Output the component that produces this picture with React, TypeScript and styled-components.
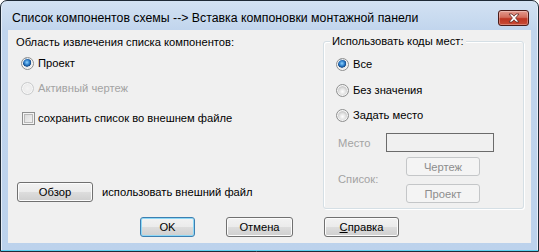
import React from 'react';
import styled, { createGlobalStyle } from 'styled-components';

const Global = createGlobalStyle`
  html, body { margin: 0; padding: 0; background: #ffffff; }
  body {
    font-family: "Liberation Sans", Arial, sans-serif;
    font-size: 11.2px;
    color: #000;
  }
  * { box-sizing: border-box; }
`;

const Window = styled.div`
  width: 539px;
  height: 252px;
  border: 1px solid #1f2a36;
  border-radius: 7px 7px 0 0;
  background: linear-gradient(180deg, #d3e2f3 0px, #c1d5ed 29px, #bcd2ec 100%);
  box-shadow: inset 0 -1px 0 #5ad1f0, inset 1px 0 0 #e6eef8, inset -1px 0 0 #e6eef8;
  padding: 0 7px 8px 7px;
  display: flex;
  flex-direction: column;
`;

const TitleBar = styled.div`
  height: 29px;
  padding: 5px 0 0 4px;
  display: flex;
  align-items: center;
  justify-content: space-between;
`;

const Title = styled.span`
  font-size: 12.3px;
  color: #000;
  line-height: 14px;
`;

const CloseButton = styled.div`
  width: 31px;
  height: 16px;
  margin-right: 2px;
  border: 1px solid #4a1b18;
  border-radius: 3px;
  background: linear-gradient(180deg, #e49a8e 0%, #d36d5c 45%, #bd3522 55%, #c94c36 100%);
  box-shadow: inset 0 0 0 1px rgba(255, 255, 255, 0.3);
  display: flex;
  align-items: center;
  justify-content: center;
`;

const Client = styled.div`
  width: 523px;
  height: 213px;
  background: #f0f0f0;
  display: flex;
  flex-direction: column;
`;

const Top = styled.div`
  display: flex;
  height: 179px;
`;

const LeftCol = styled.div`
  width: 307px;
  display: flex;
  flex-direction: column;
  padding-top: 5px;
`;

const Line = styled.div<{ $top: number; $left: number; $gap?: number }>`
  display: flex;
  align-items: center;
  height: 20px;
  margin-top: ${(p) => p.$top}px;
  padding-left: ${(p) => p.$left}px;
  gap: ${(p) => p.$gap ?? 4}px;
`;

const Label = styled.span<{ $disabled?: boolean }>`
  line-height: 14px;
  white-space: nowrap;
  color: ${(p) => (p.$disabled ? '#a3a3a3' : '#000')};
`;

const Heading = styled.div`
  line-height: 14px;
  padding-left: 8px;
`;

const Radio = styled.span<{ $checked?: boolean; $disabled?: boolean }>`
  width: 13px;
  height: 13px;
  flex: none;
  border-radius: 50%;
  border: 1px solid ${(p) => (p.$disabled ? '#c9cbcc' : '#8e8f8f')};
  background: ${(p) =>
    p.$disabled
      ? 'radial-gradient(circle at 50% 50%, #f4f4f4 0, #e9e9e9 70%)'
      : p.$checked
      ? 'radial-gradient(circle at 45% 40%, #8fd4ff 0, #2c7cc9 2.6px, #144a86 4px, #e6e6e6 4.5px, #f6f6f6 100%)'
      : 'radial-gradient(circle at 50% 60%, #ffffff 0, #e3e3e3 3px, #c9c9c9 5px, #f3f3f3 6px)'};
  box-shadow: inset 0 0 0 1px ${(p) => (p.$disabled ? '#f7f7f7' : '#f5f5f5')};
`;

const Check = styled.span`
  width: 13px;
  height: 13px;
  flex: none;
  border: 1px solid #8e8f8f;
  background: linear-gradient(135deg, #d6d6d6 0%, #f6f6f6 100%);
  box-shadow: inset 0 0 0 1px #f4f4f4, inset 0 0 0 2px #b9b9b9;
`;

const Button = styled.div<{ $w: number; $h?: number; $default?: boolean; $disabled?: boolean }>`
  width: ${(p) => p.$w}px;
  height: ${(p) => p.$h ?? 20}px;
  flex: none;
  display: flex;
  align-items: center;
  justify-content: center;
  border-radius: 3px;
  line-height: 14px;
  border: 1px solid ${(p) => (p.$default ? '#3c7fb1' : p.$disabled ? '#c4c6c8' : '#707070')};
  color: ${(p) => (p.$disabled ? '#8d8d8d' : '#000')};
  background: ${(p) =>
    p.$disabled
      ? '#f4f4f4'
      : 'linear-gradient(180deg, #f2f2f2 0%, #ebebeb 50%, #dddddd 50%, #cfcfcf 100%)'};
  box-shadow: inset 0 0 0 1px ${(p) => (p.$default ? '#8ed8f6' : p.$disabled ? '#f4f4f4' : '#fcfcfc')};
`;

const Group = styled.fieldset`
  margin: 4px 0 0 8px;
  width: 201px;
  height: 175px;
  padding: 0;
  border: 1px solid #d5dfe5;
  border-radius: 3px;
  box-shadow: inset 1px 1px 0 #ffffff, 1px 1px 0 #ffffff;
  display: flex;
  flex-direction: column;
`;

const Legend = styled.legend`
  margin-left: 6px;
  padding: 0 2px;
  line-height: 14px;
  background: #f0f0f0;
`;

const PlaceGrid = styled.div`
  margin-top: 8px;
  padding-left: 14px;
  display: grid;
  grid-template-columns: 48px 108px;
  grid-template-rows: 19px 19px 19px;
  row-gap: 5px;
  align-items: center;
`;

const PlaceButtons = styled.div`
  grid-column: 2;
  grid-row: 2 / span 2;
  padding-left: 20px;
  display: flex;
  flex-direction: column;
  gap: 8px;
  align-self: start;
`;

const ListLabel = styled(Label)`
  grid-column: 1;
  grid-row: 2 / span 2;
  align-self: center;
`;

const TextBox = styled.div`
  height: 19px;
  width: 108px;
  border: 1px solid #6b6b6b;
  background: #f0f0f0;
`;

const Footer = styled.div`
  display: flex;
  margin-top: 8px;
  padding-left: 132px;
  gap: 31px;
`;

const Acc = styled.span`
  text-decoration: underline;
`;

export default function App() {
  return (
    <>
      <Global />
      <Window>
        <TitleBar>
          <Title>Список компонентов схемы --&gt; Вставка компоновки монтажной панели</Title>
          <CloseButton>
            <svg width="14" height="10" viewBox="0 0 14 10">
              <path
                d="M2 1 L5 1 L7 3.2 L9 1 L12 1 L8.6 5 L12 9 L9 9 L7 6.8 L5 9 L2 9 L5.4 5 Z"
                fill="#ffffff"
                stroke="#5a2a25"
                strokeWidth="0.8"
                strokeLinejoin="round"
              />
            </svg>
          </CloseButton>
        </TitleBar>
        <Client>
          <Top>
            <LeftCol>
              <Heading>Область извлечения списка компонентов:</Heading>
              <Line $top={4} $left={13}>
                <Radio $checked />
                <Label>Проект</Label>
              </Line>
              <Line $top={5} $left={13}>
                <Radio $disabled />
                <Label $disabled>Активный чертеж</Label>
              </Line>
              <Line $top={10} $left={14} $gap={3}>
                <Check />
                <Label>сохранить список во внешнем файле</Label>
              </Line>
              <Line $top={54} $left={9} $gap={9}>
                <Button $w={76}>Обзор</Button>
                <Label>использовать внешний файл</Label>
              </Line>
            </LeftCol>
            <Group>
              <Legend>Использовать коды мест:</Legend>
              <Line $top={6} $left={12}>
                <Radio $checked />
                <Label>Все</Label>
              </Line>
              <Line $top={6} $left={12}>
                <Radio />
                <Label>Без значения</Label>
              </Line>
              <Line $top={5} $left={12}>
                <Radio />
                <Label>Задать место</Label>
              </Line>
              <PlaceGrid>
                <Label $disabled>Место</Label>
                <TextBox />
                <ListLabel $disabled>Список:</ListLabel>
                <PlaceButtons>
                  <Button $w={74} $h={19} $disabled>Чертеж</Button>
                  <Button $w={74} $h={19} $disabled>Проект</Button>
                </PlaceButtons>
              </PlaceGrid>
            </Group>
          </Top>
          <Footer>
            <Button $w={55} $default>OK</Button>
            <Button $w={67}>Отмена</Button>
            <Button $w={75}>
              <span>
                <Acc>С</Acc>правка
              </span>
            </Button>
          </Footer>
        </Client>
      </Window>
    </>
  );
}
